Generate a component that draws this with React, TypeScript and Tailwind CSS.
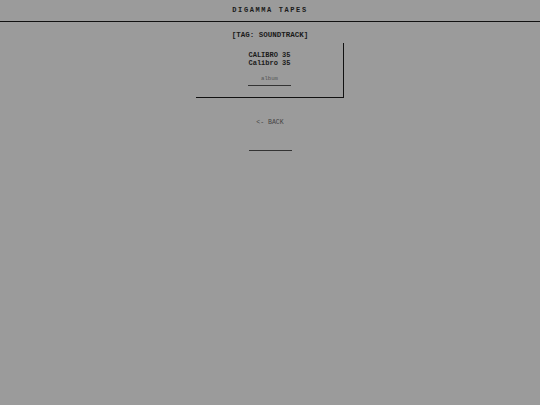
export default function App() {
  const mono = { fontFamily: '"Courier New", Courier, "Nimbus Mono PS", "Liberation Mono", monospace' };
  return (
    <div className="min-h-[405px] w-full bg-[#9b9b9b] text-[#1a1a1a]" style={mono}>
      <header className="flex h-[22px] items-center justify-center border-b border-[#111]">
        <h1 className="text-[7px] font-bold leading-none tracking-[1.6px]">DIGAMMA TAPES</h1>
      </header>
      <main className="flex flex-col items-center">
        <h2 className="mt-[9px] text-[7.5px] font-bold leading-[8px]">[TAG: SOUNDTRACK]</h2>
        <div className="mt-[4px] flex h-[55px] w-[148px] flex-col items-center border-r border-b border-[#111] pt-[9px]">
          <div className="text-[7px] font-bold leading-[7.5px]">CALIBRO 35</div>
          <div className="text-[7px] font-bold leading-[7.5px]">Calibro 35</div>
          <div className="mt-[9px] w-[43px] border-b border-[#333] pb-[3px] text-center text-[5.6px] leading-[6px] text-[#555]">
            album
          </div>
        </div>
        <a className="mt-[21px] text-[6.5px] leading-[7px] text-[#444]">&lt;- BACK</a>
        <div className="mt-[24px] h-px w-[43px] bg-[#333]" />
      </main>
    </div>
  );
}
